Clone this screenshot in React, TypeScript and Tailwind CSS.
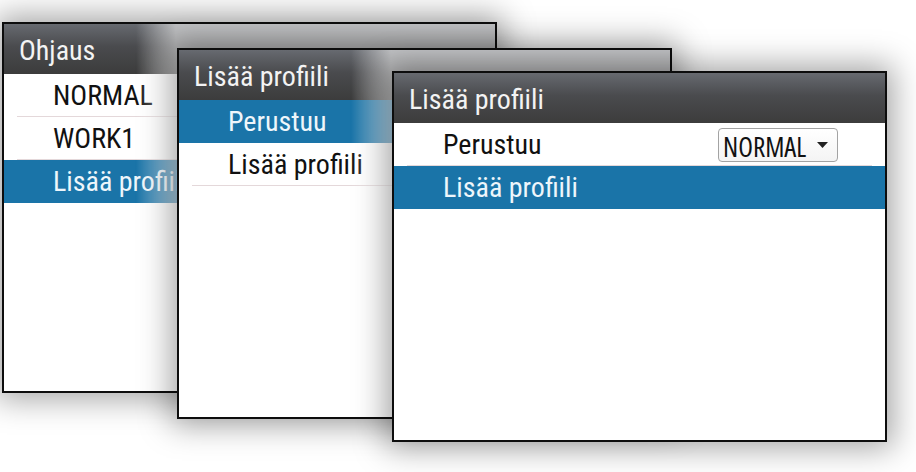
type Row = {
  label: string;
  active?: boolean;
  line?: boolean;
};

type WindowProps = {
  pos: string;
  title: string;
  rows: Row[];
  fade?: React.ReactNode;
  extra?: React.ReactNode;
};

function Window({ pos, title, rows, fade, extra }: WindowProps) {
  return (
    <section
      className={`absolute ${pos} w-[495px] h-[371px] flex flex-col bg-white border-2 border-[#0d0d0d] shadow-[0_0_30px_6px_rgba(0,0,0,0.36)] overflow-hidden`}
    >
      {/* TITLE BAR */}
      <div className="h-[50px] shrink-0 flex items-center pl-[15px] pt-[4px] bg-linear-to-b from-[#676a70] via-[#4a4b4e] via-45% to-[#3c3c3c] text-[28px] text-[#f3f3f3]">
        {title}
      </div>

      {/* ROWS */}
      {rows.map((row) => (
        <div
          key={row.label}
          className={`h-[43px] shrink-0 flex flex-col ${row.active ? "bg-[#1a74a8] text-[#eef6fb]" : "text-[#111]"}`}
        >
          <div className="h-[42px] flex items-center justify-between pl-[49px] pr-[47px] pt-[2px] text-[28px]">
            <span>{row.label}</span>
            {row.label === "Perustuu" && extra}
          </div>
          {row.line && <div className="h-px mx-[13px] bg-[#e4d8da]" />}
        </div>
      ))}

      {fade}
    </section>
  );
}

function Dropdown() {
  return (
    <div className="flex items-center justify-between w-[120px] h-[34px] pl-[4px] pr-[9px] bg-linear-to-b from-white to-[#f4f4f4] border border-[#a3a3a3] rounded-[4px] font-['Open_Sans',sans-serif] text-[27px] leading-none text-[#111]">
      <span className="pt-[2px]">NORMAL</span>
      <svg width="11" height="6" viewBox="0 0 11 6">
        <path d="M0 0h11L5.5 6z" fill="#222" />
      </svg>
    </div>
  );
}

export default function App() {
  return (
    <div className="relative w-[916px] h-[472px] overflow-hidden bg-white font-['Roboto',sans-serif] font-stretch-condensed">
      <Window
        pos="left-[2px] top-[22px]"
        title="Ohjaus"
        rows={[
          { label: "NORMAL", line: true },
          { label: "WORK1", line: true },
          { label: "Lisää profiili", active: true },
        ]}
        fade={
          <>
            <div className="absolute inset-y-0 left-[132px] w-[40px] bg-linear-to-r from-white/0 to-white/60" />
            <div className="absolute inset-y-0 left-[172px] right-0 bg-white/60" />
          </>
        }
      />

      <Window
        pos="left-[177px] top-[48px]"
        title="Lisää profiili"
        rows={[
          { label: "Perustuu", active: true },
          { label: "Lisää profiili", line: true },
        ]}
        fade={
          <>
            <div className="absolute inset-y-0 left-[172px] w-[40px] bg-linear-to-r from-white/0 to-white/60" />
            <div className="absolute inset-y-0 left-[212px] right-0 bg-white/60" />
          </>
        }
      />

      <Window
        pos="left-[392px] top-[71px]"
        title="Lisää profiili"
        rows={[
          { label: "Perustuu", line: true },
          { label: "Lisää profiili", active: true },
        ]}
        extra={<Dropdown />}
      />
    </div>
  );
}
